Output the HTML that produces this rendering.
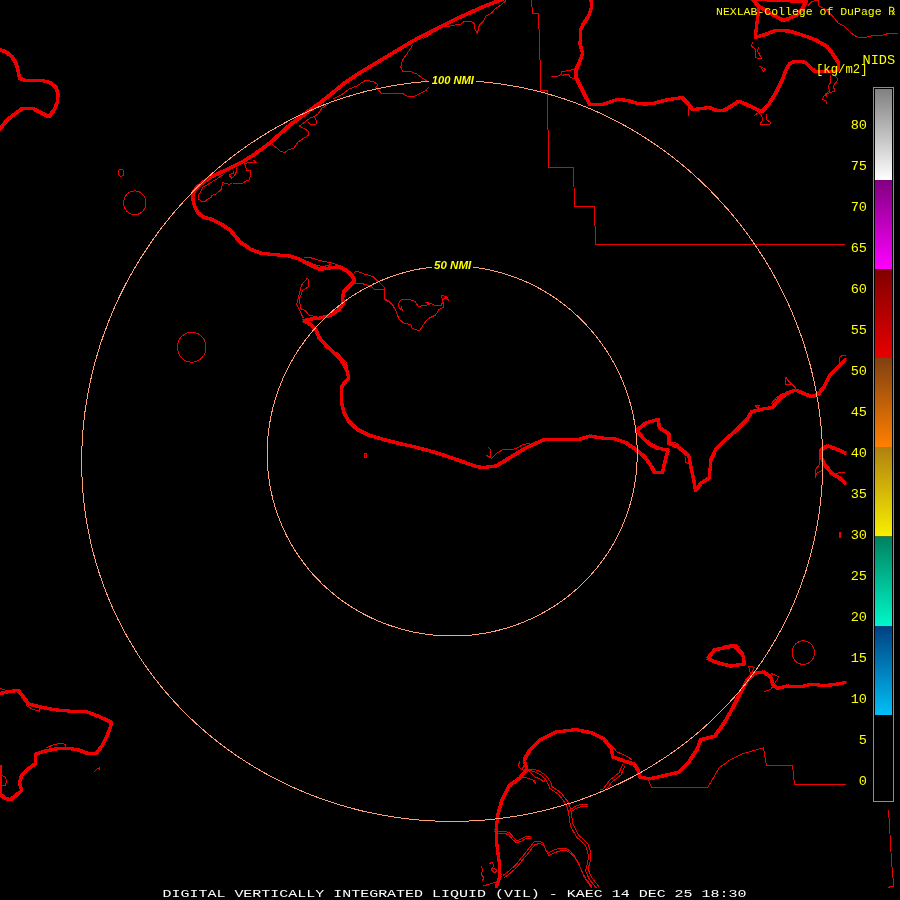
<!DOCTYPE html>
<html><head><meta charset="utf-8"><title>DIGITAL VERTICALLY INTEGRATED LIQUID (VIL) - KAEC</title>
<style>
html,body{margin:0;padding:0;background:#000;}
body{width:900px;height:900px;overflow:hidden;}
svg{display:block;}
text{filter:brightness(1);}
.tk{shape-rendering:crispEdges;fill:none;stroke:#ee0000;stroke-width:3.3;stroke-linejoin:round;stroke-linecap:round;}
.tn{shape-rendering:crispEdges;fill:none;stroke:#ee0000;stroke-width:1;stroke-linejoin:round;}
.ring{shape-rendering:crispEdges;fill:none;stroke:#ffa07a;stroke-width:1;}
.mono{font-family:"Liberation Mono","DejaVu Sans Mono",monospace;}
.lab{font-family:"Liberation Mono","DejaVu Sans Mono",monospace;font-size:12.2px;fill:#ffff00;}
.num{font-family:"Liberation Mono","DejaVu Sans Mono",monospace;font-size:13.6px;fill:#ffff00;}
.nmi{font-family:"Liberation Sans","DejaVu Sans",sans-serif;font-style:italic;font-weight:bold;font-size:11.6px;fill:#ffff00;}
</style></head><body>
<svg width="900" height="900" viewBox="0 0 900 900">
<rect width="900" height="900" fill="#000"/>
<defs>
<clipPath id="mapclip"><rect x="0" y="0" width="900" height="888"/></clipPath>

<linearGradient id="g0" x1="0" y1="0" x2="0" y2="1"><stop offset="0" stop-color="#808080"/><stop offset="1" stop-color="#ffffff"/></linearGradient>
<linearGradient id="g1" x1="0" y1="0" x2="0" y2="1"><stop offset="0" stop-color="#800080"/><stop offset="1" stop-color="#ff00ff"/></linearGradient>
<linearGradient id="g2" x1="0" y1="0" x2="0" y2="1"><stop offset="0" stop-color="#800000"/><stop offset="1" stop-color="#e80000"/></linearGradient>
<linearGradient id="g3" x1="0" y1="0" x2="0" y2="1"><stop offset="0" stop-color="#804010"/><stop offset="1" stop-color="#ff8000"/></linearGradient>
<linearGradient id="g4" x1="0" y1="0" x2="0" y2="1"><stop offset="0" stop-color="#b08010"/><stop offset="1" stop-color="#f8f000"/></linearGradient>
<linearGradient id="g5" x1="0" y1="0" x2="0" y2="1"><stop offset="0" stop-color="#008060"/><stop offset="1" stop-color="#00f8c8"/></linearGradient>
<linearGradient id="g6" x1="0" y1="0" x2="0" y2="1"><stop offset="0" stop-color="#004080"/><stop offset="1" stop-color="#00c0f8"/></linearGradient>
</defs>
<g clip-path="url(#mapclip)">
<g class="tn">
<path d="M531.5 0 L532.5 13.5 L538.5 13.5 L539.5 44 L540.5 75 L540.5 90.5 L547.5 90.5 L548.5 167.5 L573.5 167.5 L574.5 206.5 L594.5 206.5 L595.5 244.5 L845 244.5"/>
<path d="M807.9 5.8 L812.2 1.4 L818 0 L818.7 5.8 L826.6 10.1 L832.4 15.9 L838.2 23.1 L844 26 L849.7 31.8 L855.5 36.1 L860 37.5 L867 37 L875 35 L883 35 L890 33 L898 33"/>
<path d="M648.2 779.3 L651.5 787.5 L707.7 787.5 L719.3 767.7 L730 760 L742.7 753.7 L763.5 747.8 L766.5 765.5 L792.5 765.5 L794.5 784.5 L846 784.5"/>
<path d="M888.5 810 L889.5 825 L890.5 843 L891.5 861 L892.5 873 L893.5 882 L893.5 886 L891 886.5 L888 887.5"/>
<path d="M550.7 76.7 L556.7 76.7 L562 74 L561.3 72 L574 69.3"/>
<path d="M353.6 273.4 L356 271.2 L359.7 272.2 L364.6 274.1 L373.1 276.5 L377.4 280.8 L381.7 284.4 L384.7 288.1 L384.7 293 L384.1 299.1 L389 302.2 L392.7 305.8 L395.1 308.9 L397 313.8 L398.8 318.7 L403.7 323 L411 324.8 L412.2 328.5 L419.6 330.9 L423.2 324.8 L428.1 318.7 L435.5 315 L439.1 309.5 L444 307.1 L442.8 301.6 L441.6 295.5 L446.5 296.7 L448.9 300.3 L445.2 297.9 L442.8 300.3 L441.6 305.2 L434.2 305.2 L430.6 303.4 L425.7 302.2 L429.4 304.6 L418.3 306.5 L415.3 301.6 L409.8 299.4 L401.2 299.4 L398.2 304 L399.4 308.3 L402.5 310.1 L401.2 306.5"/>
<path d="M353.6 283.8 L360.9 283.2 L367 285.1 L371.3 286.3 L374.3 289.3 L380.5 290 L384.7 288.7"/>
<path d="M384.1 299.1 L387.8 300.3 L391.5 304 L393.9 306.5"/>
<path d="M307.3 278.3 L301.3 285.3 L298.7 296.7 L296.7 304.7 L300 311.3 L303.3 318"/>
<path d="M307.3 278.3 L308 279.3 L308 287.3 L302.7 290 L299.3 299.3 L300.7 308.7 L305.3 310.7 L309.3 315.3 L317.3 316.7"/>
<path d="M203 186.7 L200.7 192 L198.3 194.7 L198.7 199.3 L201.7 201.3 L205 201.3 L207.7 199 L211.7 197.3 L211.7 195.3 L216.3 194 L219 191.3 L221.3 189.3 L222.7 182.7 L225 183.3 L229 184.3 L232.3 183 L237 183.3 L242.3 183.3 L246 181 L249 180 L250 177 L251 171 L246.5 170 L245 165 L244 164 L250 162 L257 162.5 L253 160"/>
<path d="M236.3 168 L236.3 172 L234.3 176 L232 178.3 L229.7 176.3 L229.7 174.3 L233 173.7 L233.7 170.7"/>
<path d="M272 144.5 L277 148 L280 151 L285 152.5 L288 150 L294 148 L298 142 L304 138 L309 135 L308 131 L304 128.5 L299.5 126 L305 122 L310 118 L314 116.5 L316.5 121 L316 124 L310 124 L308.5 122.5"/>
<path d="M314 116.5 L318 114 L322 108 L327 105 L328 103"/>
<path d="M203 186.7 L207 185 L211.7 182 L216.3 179.3 L221 176 L224.3 174.3"/>
<path d="M428.7 86.7 L426 90.7 L420.7 93.3 L415.3 96 L407.3 96 L402 93.3 L392.7 93.3 L382 94 L379.3 90.7 L375.3 88 L378 84.7 L374 82 L366 80 L356.7 86 L348.7 89.3 L340.7 95.3 L332.7 99.3"/>
<path d="M412.7 45.3 L407.3 53.3 L402.7 60 L400.7 66.7 L402.7 71.3 L410 71.3 L416.7 74 L423.3 78.7 L428.7 82"/>
<path d="M423 38.7 L434 32 L443.3 26.7 L450 26"/>
<path d="M506 0.7 L500.7 5.3 L495.3 8.7 L491.3 13.3 L486 16 L483.3 21.3 L479.3 25.3 L477.3 33.3 L474.7 28.7 L474.7 24 L471.3 21.3 L464.7 21.3 L460.7 24 L450 26"/>
<path d="M304 258 L309.3 257.3 L320 260.7 L330.7 262.7 L338.7 265.3"/>
<path d="M306.7 260.7 L314.7 264.7 L322.7 266.7 L330.7 264.7"/>
<path d="M337 352 L342 358 L346 362 L348 368 L346 372"/>
<path d="M487.5 446.7 L490.8 450 L490 456.7 L485.8 455 L491.7 458.3 L496.7 453.3 L503.3 449.2 L513.3 449.2 L518.3 447.5 L523.3 444.2 L530 443.7"/>
<path d="M669 443 L675 442.5 L679 445 L677 447"/>
<path d="M686 457 L685.5 462 L688 464"/>
<path d="M819.2 455 L819.2 465 L815 470 L815 478.3 L816.7 473.3 L822.5 470"/>
<path d="M836 474 L840 472 L845 473"/>
<path d="M840 532 L839 538 L841 537 L840 532"/>
<path d="M755 405.8 L759.2 405 L758.3 408.3 L755 405.8"/>
<path d="M770.8 404.2 L776.7 397.5 L783.3 393.3"/>
<path d="M785.8 376.7 L785 384.2 L790.8 384.2 L795.8 388.3 L787.5 380 L785.8 376.7"/>
<path d="M839.2 362.5 L839.2 357.5 L842.5 355.3 L845.8 355.8"/>
<path d="M562 75.3 L568.7 74 L570 77.3 L574 78.7"/>
<path d="M752.3 41.9 L751.6 46.2 L755.2 49.1 L755.2 57.8 L761.7 58.5 L757.3 50.5 L758.8 46.9"/>
<path d="M759.5 66.4 L765.3 69.3 L763.1 71.5 L761.7 67.9"/>
<path d="M835 75 L838 80 L833 86 L835 91 L829 93 L824 96 L822.5 99 L826 101 L826.5 104"/>
<path d="M830 75 L831 82 L828 87 L830 91 L825 94 L827 97"/>
<path d="M754.4 115.5 L758.8 112.6 L761.7 115.5 L762.4 119.9 L760.2 124.2 L768.9 124.9 L771 122.7 L766.7 119.9 L766 114.1"/>
<path d="M688 105 L689 116"/>
<path d="M1.4 775.3 L5.8 777.5 L6.5 781.1 L5.1 785.4 L1.4 785.4"/>
<path d="M93.9 772.4 L96.1 769.6 L99.7 767.4 L99.7 769.6"/>
<path d="M26 705.3 L33.2 709.6 L39.7 711.1 L39 708.9"/>
<path d="M46.2 747.9 L53.4 744.7 L60.7 743.3 L65.7 744.3 L65.7 747.2"/>
<path d="M0 688.7 L4.3 689.4 L6.5 690.8 L2.9 693.7"/>
<path d="M364 453 L366 453 L366 458 L364 457 L364 453"/>
<path d="M526.7 769 L533 769 L539 771 L544 774 L548 778 L551 783 L552 786.7 L557 790 L561 793 L565 798 L568 802 L570 807 L571 811 L572 818 L573 824.4 L576 830 L579 835.5 L584 840 L588 844 L590 850 L591 855.5 L590 862 L588 869 L590 874 L592 878 L596 883 L599 886.7"/>
<path d="M524.2 770.5 L530.5 770.5 L536.5 772.5 L541.5 775.5 L545.5 779.5 L548.5 784.5 L549.5 788.2 L554.5 791.5 L558.5 794.5 L562.5 799.5 L565.5 803.5 L567.5 808.5 L568.5 812.5 L569.5 819.5 L570.5 825.9 L573.5 831.5 L576.5 837 L581.5 841.5 L585.5 845.5 L587.5 851.5 L588.5 857 L587.5 863.5 L585.5 870.5 L587.5 875.5 L589.5 879.5 L593.5 884.5 L596.5 888.2"/>
<path d="M571 809 L576 806 L582 804 L588 804"/>
<path d="M572 811 L577 808 L583 806 L588 806"/>
<path d="M498 831 L504 831 L510 833 L513 837 L516.7 841 L521 839 L525.5 836.7 L531 836"/>
<path d="M498 833 L504 833 L509 835 L512 839 L516.7 843 L522 841 L526 838.5 L531 838"/>
<path d="M503 875.5 L510 870 L516.7 864 L521 858 L525.5 853 L530 847 L534 842 L539 841 L543 843 L545 848 L548 853 L552 851 L556.7 849 L561 848 L565.5 848 L570 851 L574 855.5 L578 862 L581 869 L583 874 L585.5 878 L589 883 L592 886.7"/>
<path d="M504 878 L511 872.5 L517.7 866.5 L522 860.5 L526.5 855.5 L531 849.5 L535 844.5 L540 843.5 L544 845.5 L546 850.5 L549 855.5 L553 853.5 L557.7 851.5 L562 850.5 L566.5 850.5 L571 853.5 L575 858 L579 864.5 L582 871.5 L584 876.5 L586.5 880.5 L590 885.5 L593 889.2"/>
<path d="M600 790 L603 789 L607 784 L610 780 L615 776 L619 773 L621 768 L623 764"/>
<path d="M602 792 L605 790 L609 786 L612 782 L617 778 L621 775 L623 770 L625 766"/>
<path d="M526.7 769 L531 773 L535 777 L540 779 L544 782 L546 778"/>
<path d="M521 776.7 L527 778 L533 780 L536 784 L534 780"/>
<path d="M481 866 L483 870 L481 874 L484 878 L482 881"/>
<path d="M489 864 L492 862 L494 866 L491 870 L495 873 L497 870 L493 868"/>
<path d="M483 886 L490 884 L496 882"/>
<path d="M520 761 L518 766 L522 770 L524 765"/>
<path d="M612 746 L617 752 L622 754 L628 757 L632 760"/>
<path d="M748.5 666.2 L754.3 667.3 L750.8 674.3 L748.5 666.2"/>
<path d="M770.7 673.2 L778.8 676.7 L775.3 682.5 L770.7 689.5 L763.7 691.8"/>
<path d="M720 648 L724 646 L735 644 L740 647"/>
<ellipse cx="134.8" cy="202.8" rx="11.2" ry="11.9"/>
<ellipse cx="191.7" cy="347.2" rx="14.3" ry="15"/>
<ellipse cx="803.3" cy="652.6" rx="11.2" ry="11.8"/>
<ellipse cx="121.1" cy="172.7" rx="2.7" ry="3.5"/>
</g>
<defs><g id="coast">
<path d="M-1 49.3 L6.1 52 L12.2 56.9 L16.5 64.2 L18.3 71.6 L19.6 78.3 L25.7 80.7 L34.2 80.4 L42.8 80.7 L50.1 82.6 L56.2 87.5 L58.1 94.8 L57.5 102.1 L54.4 109.5 L48.9 116.8 L40.3 112.5 L32.4 108.2 L22.6 108.2 L17.1 112.5 L11 116.8 L4.9 122.9 L-1 130"/>
<path d="M503 -1 L496.7 1.5 L483.3 6.7 L470 12.7 L456.7 18.7 L443.3 25.3 L436.7 28.7 L423.3 35.3 L410 42.7 L396.7 50.7 L383.3 58.7 L370 66.7 L356.7 74.7 L343.3 84 L330 95 L320 103 L310 110 L300 117.5 L290 125 L280 134 L270 143 L255 154 L243 161.5 L231.7 167.3 L221.7 172 L211.7 176.7 L203.7 182 L197 187.3 L193.3 192.7 L192.7 198 L194.3 205.3 L197.7 212.7 L203.7 217.3 L211.7 219.3 L220 223.5 L230 230 L240 242 L250.7 249.3 L261.3 253.3 L274.7 254.7 L289.3 256 L300 259.3 L309.3 264.7 L320 269.3 L329.3 268 L338.7 266.7 L346.7 270.7 L352 275.3 L354.7 280.7 L349.3 286 L344 291.3 L342.7 296.7 L343.3 303.3 L338.7 310 L330.7 315.3 L320 318 L309.3 319.3 L304 320.7 L310.7 324.7 L316 330 L319.3 338 L326.7 346 L336 354.7 L342.7 362 L346.7 370 L348.7 378 L342 386 L341.6 394 L342 404.7 L344 412.7 L349.3 422 L357.3 429.3 L369.3 435.3 L385.3 440 L401.3 444 L410 445.8 L426.7 450 L443.3 455 L460 460.8 L476.7 466.7 L483.3 467.5 L496.7 465.8 L510 457.5 L526.7 447.5 L543.3 440 L551.7 439.2 L568.9 439.7 L580.2 439.1 L590.6 435.9 L599.1 437.8 L614.2 438.7 L625.6 442.5 L635 449.1 L644.4 456.7 L650.1 464.2 L654.8 472.7 L662.4 472.7 L665.2 460.4 L668.1 450.1"/>
<path d="M636.9 430.2 L642.6 437.8 L650.1 444.4 L657.7 448.2 L668.1 450.1"/>
<path d="M636.9 430.2 L646.3 422.7 L658.6 419.5 L659.2 427.4 L669 434 L669 443.4 L678.4 447.2 L688.8 455.7 L690.7 466.1 L693.6 479.3 L695.5 490.7 L701.1 483.1 L709.4 477.8 L710.7 460.2 L716 449.2 L725 440 L736.7 430 L746.7 420 L751.7 411.7 L761.7 409.2 L772.5 407.5 L780 398.3 L788.3 392.5 L795.8 390 L803.3 393.3 L811.7 396.7 L818.3 394.2 L824.2 386.7 L830 375 L836.7 368.3 L846 359"/>
<path d="M591 -1 L591.3 8 L588.7 16 L583.3 24 L580.4 30.7 L580 44 L582.7 53.3 L579.3 62.7 L576 69.3 L576 77.3 L580.7 86.7 L586 97.3 L590 104.7 L602 104.7 L610 102 L618 99.3 L628.7 100.7 L636.7 103.3 L645 104.2 L654.4 103.2 L664.5 100.4 L681.9 97.5 L687.7 103.2 L692.7 109.7 L702.1 108.3 L709.3 107.6 L718 110.9 L723.8 110.5 L732.4 105.4 L738.9 101.1 L746.9 104.7 L751.6 106.9 L761.7 111.9 L768.9 104 L776.1 92.4 L781.9 80.9 L786.2 69.3 L789.8 63.5 L794.9 61.4 L805 62.1 L810.8 67.9 L815.1 71.5 L826.6 71.9 L835.3 71.5 L838.9 67.9 L838.2 62.1 L832.4 53.4 L826.6 46.2 L815.1 39.7 L803.5 35.4 L789.1 31 L774.7 30.8 L764.5 34.7 L755.2 37.5 L756.6 26 L758 14.4 L758.5 6 L752 -1"/>
<path d="M758.5 6 L770 13 L783.3 20.5 L790 18 L797.8 14.4 L802 9 L805 4 L806.5 -1"/>
<path d="M846 453.3 L836.7 449.2 L827.5 445.8 L820.8 450 L820.8 456.7 L825 465 L831.7 473.3 L840 478.3 L846 484"/>
<path d="M-1 693.8 L8.7 691.6 L18.1 690.4 L23.1 696.6 L28.2 703.8 L39 706.7 L53.4 709.6 L69.3 711.1 L86.7 711.8 L99.7 716.8 L111.9 722.6 L107.6 734.9 L102.6 745 L96.1 753.7 L88.1 753.7 L79.4 750.1 L67.9 748.2 L54.9 749 L43.3 751.5 L35.4 754.4 L35.1 763.8 L27.4 769.6 L21.7 775.3 L19.5 782.6 L21.7 790.5 L15.9 795.6 L10.1 799.9 L4.3 797.7 L0 794.1 L0 766"/>
<path d="M496 888 L500 876 L499 860 L497 846 L496 830 L498 814 L502 800 L509 786 L520 778 L527 769 L524 760 L530 750 L540 740 L556 732 L576 729.6 L592 733 L604 739 L611 748 L613 757 L624 761 L634 764 L638 770 L640 777 L649.3 778.9 L663.3 775.8 L678.5 772.3 L689 761.8 L697.2 749 L700.7 739.7 L714.7 736.2 L724 723.3 L733.3 707 L740.3 693 L747.3 680.2 L754.3 673.2 L763.7 672 L770.7 676.7 L773 684.8 L777.7 688.3 L787 686 L801 686.7 L811.5 684.1 L822 685.5 L833.7 684.8 L846 682.4"/>
<path d="M707.7 658.5 L714.7 649.8 L734.5 645.9 L742.7 654.5 L744.5 663.8 L731 666.2 L717 662.7 L707.7 658.5"/>
<path d="M753 -0.5 L770 0 L787 0.5 L797 1.5 L806 1.5"/>
</g></defs>
<g class="tk" style="stroke-width:1.1">
<use href="#coast" transform="translate(-1 -1)"/>
<use href="#coast" transform="translate(1 -1)"/>
<use href="#coast" transform="translate(-1 1)"/>
<use href="#coast" transform="translate(1 1)"/>
</g>
<use href="#coast" class="tk" style="stroke-width:2.1"/>
<path class="ring" d="M822.6 451 L822.7 460.7 L822.6 470.4 L822.3 480.1 L821.7 489.7 L820.8 499.3 L819.7 508.9 L818.3 518.5 L816.6 528 L814.8 537.5 L812.6 546.9 L810.2 556.2 L807.6 565.5 L804.7 574.6 L801.5 583.7 L798.1 592.7 L794.5 601.7 L790.6 610.5 L786.5 619.2 L782.1 627.7 L777.5 636.2 L772.7 644.5 L767.7 652.7 L762.4 660.8 L756.9 668.7 L751.1 676.5 L745.2 684.1 L739.1 691.6 L732.7 698.8 L726.1 706 L719.4 712.9 L712.4 719.7 L705.3 726.3 L698 732.7 L690.4 738.9 L682.8 744.9 L674.9 750.7 L666.9 756.3 L658.7 761.6 L650.4 766.8 L642 771.8 L633.4 776.5 L624.6 781 L615.8 785.3 L606.8 789.4 L597.7 793.2 L588.5 796.8 L579.2 800.2 L569.8 803.3 L560.3 806.1 L550.7 808.8 L541.1 811.2 L531.4 813.3 L521.6 815.2 L511.8 816.8 L501.9 818.2 L492 819.4 L482.1 820.3 L472.1 820.9 L462.2 821.3 L452.2 821.4 L442.2 821.3 L432.3 820.9 L422.3 820.3 L412.4 819.4 L402.5 818.2 L392.6 816.8 L382.8 815.2 L373 813.3 L363.3 811.2 L353.7 808.8 L344.1 806.1 L334.6 803.3 L325.2 800.2 L315.9 796.8 L306.7 793.2 L297.6 789.4 L288.6 785.3 L279.8 781 L271 776.5 L262.4 771.8 L254 766.8 L245.7 761.6 L237.5 756.3 L229.5 750.7 L221.6 744.9 L214 738.9 L206.4 732.7 L199.1 726.3 L192 719.7 L185 712.9 L178.3 706 L171.7 698.8 L165.3 691.6 L159.2 684.1 L153.3 676.5 L147.5 668.7 L142 660.8 L136.7 652.7 L131.7 644.5 L126.9 636.2 L122.3 627.7 L117.9 619.2 L113.8 610.5 L109.9 601.7 L106.3 592.7 L102.9 583.7 L99.7 574.6 L96.8 565.5 L94.2 556.2 L91.8 546.9 L89.6 537.5 L87.8 528 L86.1 518.5 L84.7 508.9 L83.6 499.3 L82.7 489.7 L82.1 480.1 L81.8 470.4 L81.7 460.7 L81.8 451 L82.2 441.3 L82.9 431.6 L83.8 421.9 L84.9 412.3 L86.3 402.7 L88 393.1 L89.9 383.5 L92 374 L94.4 364.5 L97.1 355.1 L99.9 345.8 L103 336.5 L106.4 327.4 L109.9 318.3 L113.7 309.3 L117.7 300.3 L122 291.5 L126.4 282.8 L131.1 274.3 L136 265.8 L141.1 257.5 L146.4 249.3 L151.9 241.2 L157.5 233.3 L163.4 225.5 L169.5 217.9 L175.7 210.4 L182.2 203.2 L188.8 196 L195.5 189.1 L202.5 182.3 L209.6 175.7 L216.8 169.3 L224.2 163.1 L231.8 157.1 L239.5 151.3 L247.3 145.7 L255.3 140.4 L263.4 135.2 L271.6 130.2 L279.9 125.5 L288.3 121 L296.8 116.7 L305.5 112.6 L314.2 108.8 L323 105.2 L331.9 101.8 L340.8 98.7 L349.9 95.9 L359 93.2 L368.1 90.8 L377.3 88.7 L386.6 86.8 L395.9 85.2 L405.2 83.8 L414.6 82.6 L424 81.7 L433.4 81.1 L442.8 80.7 L452.2 80.6 L461.6 80.7 L471 81.1 L480.4 81.7 L489.8 82.6 L499.2 83.8 L508.5 85.2 L517.8 86.8 L527.1 88.7 L536.3 90.8 L545.4 93.2 L554.5 95.9 L563.6 98.7 L572.5 101.8 L581.4 105.2 L590.2 108.8 L598.9 112.6 L607.6 116.7 L616.1 121 L624.5 125.5 L632.8 130.2 L641 135.2 L649.1 140.4 L657.1 145.7 L664.9 151.3 L672.6 157.1 L680.2 163.1 L687.6 169.3 L694.8 175.7 L701.9 182.3 L708.9 189.1 L715.6 196 L722.2 203.2 L728.7 210.4 L734.9 217.9 L741 225.5 L746.9 233.3 L752.5 241.2 L758 249.3 L763.3 257.5 L768.4 265.8 L773.3 274.3 L778 282.8 L782.4 291.5 L786.7 300.3 L790.7 309.3 L794.5 318.3 L798 327.4 L801.4 336.5 L804.5 345.8 L807.3 355.1 L810 364.5 L812.4 374 L814.5 383.5 L816.4 393.1 L818.1 402.7 L819.5 412.3 L820.6 421.9 L821.5 431.6 L822.2 441.3Z"/>
<path class="ring" d="M637.2 451 L637.2 455.8 L637.1 460.7 L636.8 465.5 L636.5 470.3 L636 475.1 L635.3 479.9 L634.6 484.7 L633.7 489.5 L632.7 494.2 L631.6 498.9 L630.3 503.5 L628.9 508.2 L627.4 512.8 L625.8 517.3 L624 521.8 L622.2 526.2 L620.2 530.6 L618.1 535 L615.9 539.3 L613.6 543.5 L611.1 547.7 L608.6 551.8 L605.9 555.8 L603.1 559.7 L600.2 563.6 L597.3 567.4 L594.2 571.1 L591 574.8 L587.7 578.3 L584.3 581.8 L580.9 585.2 L577.3 588.5 L573.6 591.7 L569.9 594.8 L566.1 597.8 L562.2 600.7 L558.2 603.5 L554.2 606.2 L550 608.7 L545.8 611.2 L541.6 613.6 L537.3 615.8 L532.9 618 L528.4 620 L523.9 621.9 L519.4 623.7 L514.8 625.4 L510.1 626.9 L505.5 628.4 L500.7 629.7 L496 630.9 L491.2 632 L486.4 632.9 L481.5 633.7 L476.7 634.4 L471.8 635 L466.9 635.4 L462 635.7 L457.1 635.9 L452.2 636 L447.3 635.9 L442.4 635.7 L437.5 635.4 L432.6 635 L427.7 634.4 L422.9 633.7 L418 632.9 L413.2 632 L408.4 630.9 L403.7 629.7 L398.9 628.4 L394.3 626.9 L389.6 625.4 L385 623.7 L380.5 621.9 L376 620 L371.5 618 L367.1 615.8 L362.8 613.6 L358.6 611.2 L354.4 608.7 L350.2 606.2 L346.2 603.5 L342.2 600.7 L338.3 597.8 L334.5 594.8 L330.8 591.7 L327.1 588.5 L323.5 585.2 L320.1 581.8 L316.7 578.3 L313.4 574.8 L310.2 571.1 L307.1 567.4 L304.2 563.6 L301.3 559.7 L298.5 555.8 L295.8 551.8 L293.3 547.7 L290.8 543.5 L288.5 539.3 L286.3 535 L284.2 530.6 L282.2 526.2 L280.4 521.8 L278.6 517.3 L277 512.8 L275.5 508.2 L274.1 503.5 L272.8 498.9 L271.7 494.2 L270.7 489.5 L269.8 484.7 L269.1 479.9 L268.4 475.1 L267.9 470.3 L267.6 465.5 L267.3 460.7 L267.2 455.8 L267.2 451 L267.3 446.2 L267.6 441.3 L268 436.5 L268.5 431.7 L269.1 426.9 L269.9 422.1 L270.8 417.3 L271.8 412.5 L272.9 407.8 L274.2 403.1 L275.5 398.5 L277 393.8 L278.6 389.2 L280.4 384.7 L282.2 380.2 L284.2 375.8 L286.2 371.4 L288.4 367 L290.7 362.7 L293.1 358.5 L295.6 354.3 L298.2 350.2 L301 346.2 L303.8 342.3 L306.7 338.4 L309.7 334.6 L312.8 330.9 L316 327.2 L319.3 323.7 L322.7 320.2 L326.2 316.8 L329.7 313.5 L333.3 310.3 L337.1 307.2 L340.8 304.2 L344.7 301.3 L348.6 298.5 L352.6 295.8 L356.7 293.3 L360.8 290.8 L365 288.4 L369.3 286.2 L373.6 284 L377.9 282 L382.3 280.1 L386.8 278.3 L391.3 276.6 L395.8 275.1 L400.4 273.6 L405 272.3 L409.6 271.1 L414.3 270 L419 269.1 L423.7 268.3 L428.4 267.6 L433.1 267 L437.9 266.6 L442.7 266.3 L447.4 266.1 L452.2 266 L457 266.1 L461.7 266.3 L466.5 266.6 L471.3 267 L476 267.6 L480.7 268.3 L485.4 269.1 L490.1 270 L494.8 271.1 L499.4 272.3 L504 273.6 L508.6 275.1 L513.1 276.6 L517.6 278.3 L522.1 280.1 L526.5 282 L530.8 284 L535.1 286.2 L539.4 288.4 L543.6 290.8 L547.7 293.3 L551.8 295.8 L555.8 298.5 L559.7 301.3 L563.6 304.2 L567.3 307.2 L571.1 310.3 L574.7 313.5 L578.2 316.8 L581.7 320.2 L585.1 323.7 L588.4 327.2 L591.6 330.9 L594.7 334.6 L597.7 338.4 L600.6 342.3 L603.4 346.2 L606.2 350.2 L608.8 354.3 L611.3 358.5 L613.7 362.7 L616 367 L618.2 371.4 L620.2 375.8 L622.2 380.2 L624 384.7 L625.8 389.2 L627.4 393.8 L628.9 398.5 L630.2 403.1 L631.5 407.8 L632.6 412.5 L633.6 417.3 L634.5 422.1 L635.3 426.9 L635.9 431.7 L636.4 436.5 L636.8 441.3 L637.1 446.2Z"/>
</g>
<rect x="846.5" y="52" width="53.5" height="757.5" fill="#000"/>
<rect x="714" y="3" width="186" height="16" fill="#000" opacity="0"/>
<rect x="429" y="70" width="47" height="20" fill="#000"/>
<rect x="432" y="256" width="41" height="18" fill="#000"/>
<text class="nmi" x="431.7" y="84" textLength="42.3" lengthAdjust="spacingAndGlyphs">100 NMI</text>
<text class="nmi" x="434" y="269" textLength="37.3" lengthAdjust="spacingAndGlyphs">50 NMI</text>
<rect x="873.5" y="87.5" width="20" height="714" fill="#000" stroke="#8c8c8c" stroke-width="1"/>
<rect x="875" y="89" width="17" height="91" fill="url(#g0)"/>
<rect x="875" y="180" width="17" height="89" fill="url(#g1)"/>
<rect x="875" y="269" width="17" height="89" fill="url(#g2)"/>
<rect x="875" y="358" width="17" height="89" fill="url(#g3)"/>
<rect x="875" y="447" width="17" height="89.5" fill="url(#g4)"/>
<rect x="875" y="536.5" width="17" height="89.5" fill="url(#g5)"/>
<rect x="875" y="626" width="17" height="89" fill="url(#g6)"/>
<text class="num" x="867" y="785.1" text-anchor="end">0</text>
<text class="num" x="867" y="744.1" text-anchor="end">5</text>
<text class="num" x="867" y="703.1" text-anchor="end">10</text>
<text class="num" x="867" y="662.1" text-anchor="end">15</text>
<text class="num" x="867" y="621.1" text-anchor="end">20</text>
<text class="num" x="867" y="580.1" text-anchor="end">25</text>
<text class="num" x="867" y="539.1" text-anchor="end">30</text>
<text class="num" x="867" y="498.1" text-anchor="end">35</text>
<text class="num" x="867" y="457.1" text-anchor="end">40</text>
<text class="num" x="867" y="416.1" text-anchor="end">45</text>
<text class="num" x="867" y="375.1" text-anchor="end">50</text>
<text class="num" x="867" y="334.1" text-anchor="end">55</text>
<text class="num" x="867" y="293.1" text-anchor="end">60</text>
<text class="num" x="867" y="252.1" text-anchor="end">65</text>
<text class="num" x="867" y="211.1" text-anchor="end">70</text>
<text class="num" x="867" y="170.1" text-anchor="end">75</text>
<text class="num" x="867" y="129.1" text-anchor="end">80</text>
<text class="lab" x="716" y="14.6" style="font-size:11.5px" textLength="179.5" lengthAdjust="spacingAndGlyphs">NEXLAB-College of DuPage &#x211E;</text>
<text class="num" x="895.2" y="63.5" text-anchor="end">NIDS</text>
<text class="lab" x="816" y="73.4" textLength="51.5" lengthAdjust="spacingAndGlyphs">[kg/m2]</text>
<text class="mono" x="162.5" y="897" fill="#fff" font-size="11.6px" textLength="584" lengthAdjust="spacingAndGlyphs">DIGITAL VERTICALLY INTEGRATED LIQUID (VIL) - KAEC 14 DEC 25 18:30</text>
</svg></body></html>
